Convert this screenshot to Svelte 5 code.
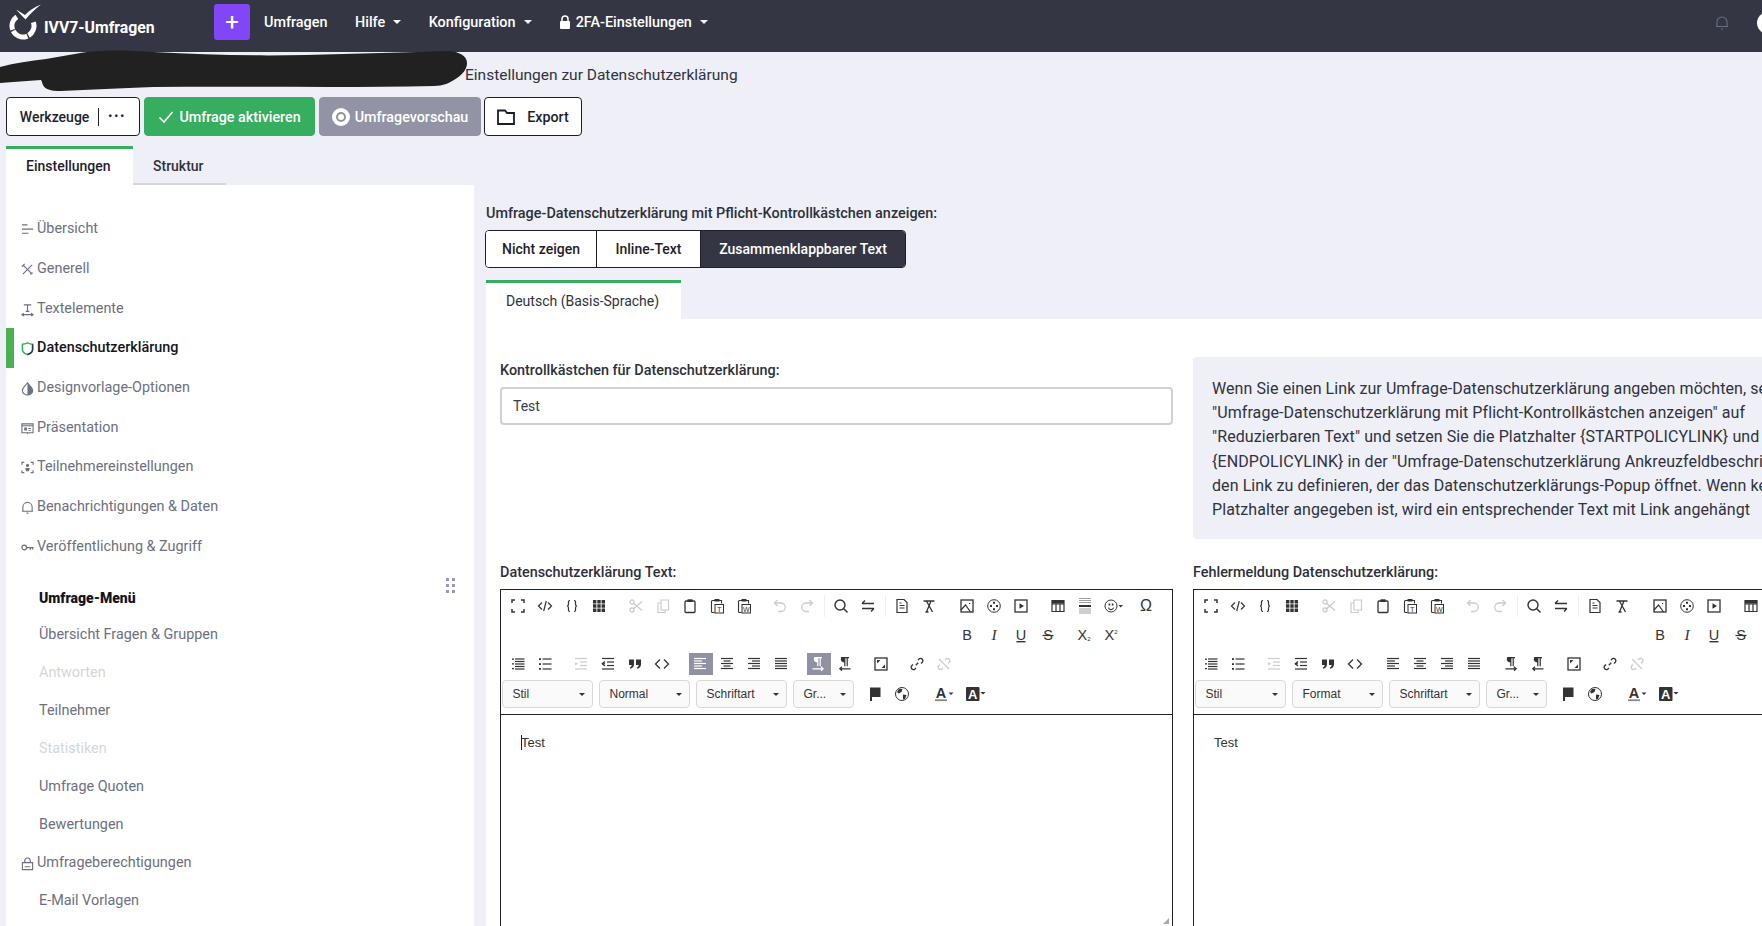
<script>
  const stroke = (d, w = 1.2) => `<path d="${d}" stroke-width="${w}"/>`;
  const fill = (d) => `<path d="${d}" fill="currentColor" stroke="none"/>`;
  const label = (t, size = 14, extra = '') =>
    `<text x="8" y="13" text-anchor="middle" font-size="${size}" fill="currentColor" stroke="none" font-family="Liberation Sans, sans-serif" ${extra}>${t}</text>`;
  const clip = '<path d="M5.5 14.5H3.5a1 1 0 0 1-1-1v-10a1 1 0 0 1 1-1h9v3" stroke-width="1.1"/><rect x="5.5" y="1" width="5" height="2.6" rx=".6" fill="currentColor" stroke="none"/>';
  const lines = (rows) => rows.map(([a, b, y]) => `<path d="M${a} ${y}H${b}" stroke-width="1.2"/>`).join('');
  const pilcrow = 'M4 1h8v1.2h-1.2v8H9.6v-8H8.4v8H7.2V6.4C5.2 6.4 3.8 5.2 3.8 3.6 3.8 2.2 4.4 1.4 4 1z';

  const tb = {
    fullscreen: stroke('M2 5V2h3M11 2h3v3M14 11v3h-3M5 14H2v-3', 1.5),
    code: stroke('M5 4.5 1.5 8 5 11.5M11 4.5 14.5 8 11 11.5M9.3 3l-2.6 10'),
    braces: stroke('M6 2.5c-2 0-1.5 2-1.5 3.5S4 8 3 8c1 0 1.5.5 1.5 2S4 13.5 6 13.5M10 2.5c2 0 1.5 2 1.5 3.5S12 8 13 8c-1 0-1.5.5-1.5 2s.5 3.5-1.5 3.5'),
    grid: fill('M2 2h3.4v3.4H2zM6.3 2h3.4v3.4H6.3zM10.6 2H14v3.4h-3.4zM2 6.3h3.4v3.4H2zM6.3 6.3h3.4v3.4H6.3zM10.6 6.3H14v3.4h-3.4zM2 10.6h3.4V14H2zM6.3 10.6h3.4V14H6.3zM10.6 10.6H14V14h-3.4z'),
    cut: '<circle cx="4" cy="4" r="2" stroke-width="1.3"/><circle cx="4" cy="12" r="2" stroke-width="1.3"/>' + stroke('M5.5 5.2 14 12.5M5.5 10.8 14 3.5', 1.3),
    copy: stroke('M6 2h7.5v10H6zM6 5H3v9.5h7V12'),
    paste: '<rect x="3" y="3" width="10" height="11.5" rx="1" stroke-width="1.3"/><rect x="5.5" y="1.3" width="5" height="2.7" fill="currentColor" stroke="none"/>',
    pastetext: clip + '<rect x="6" y="6.5" width="8.5" height="8.5" stroke-width="1"/><text x="10.2" y="13.5" text-anchor="middle" font-size="7.5" fill="currentColor" stroke="none" font-family="Liberation Sans, sans-serif">T</text>',
    pasteword: clip + '<rect x="6" y="6.5" width="8.5" height="8.5" stroke-width="1"/><text x="10.2" y="13.5" text-anchor="middle" font-size="7" fill="currentColor" stroke="none" font-family="Liberation Sans, sans-serif">W</text>',
    undo: stroke('M5.5 2 2.5 5l3 3M2.5 5H9a4.2 4.2 0 0 1 0 8.5H6', 1.3),
    redo: stroke('M10.5 2l3 3-3 3M13.5 5H7a4.2 4.2 0 0 0 0 8.5h3', 1.3),
    search: '<circle cx="7" cy="7" r="5" stroke-width="1.4"/>' + stroke('m10.5 10.5 4 4', 1.5),
    replace: stroke('M2 5.5h12M5 2.5l-3 3M14 10.5H2M11 13.5l3-3', 1.4),
    doc: stroke('M3 1.5h7l3 3v10H3zM5.5 7.5h5M5.5 10h5M5.5 5h2'),
    clean: stroke('M2.5 3h11M5.5 3l6 11M10 3 5.5 14M4.5 14h3', 1.3),
    image: '<rect x="2" y="2" width="12" height="12" stroke-width="1.3"/>' + stroke('m2 12 4.5-5 5 7M10 5.5h1.2'),
    media: '<circle cx="8" cy="8" r="6.3"/>' + fill('M7 3.8h2v2H7zM4 7h2v2H4zM10 7h2v2h-2zM7 10.2h2v2H7z'),
    play: '<rect x="2" y="2" width="12" height="12" stroke-width="1.3"/>' + fill('M6.5 5.2 11 8l-4.5 2.8z'),
    table: stroke('M2 2.5h12v11H2zM2 6h12M6 6v7.5M10 6v7.5', 1.2) + fill('M2 2h12v3.6H2z'),
    hr: '<path d="M2 .5h12M2 2.5h12M2 4.5h12M2 11h12M2 13h12M2 15h12" stroke="#888" stroke-width=".8"/>' + fill('M2 7h12v2H2z'),
    smile: '<circle cx="7" cy="8" r="6"/>' + fill('M4.6 5.6h1.6v1.8H4.6zM7.8 5.6h1.6v1.8H7.8z') + stroke('M4.3 9.6c1 2.6 4.4 2.6 5.4 0') + fill('M14.5 7h4.5L16.7 9.5z'),
    omega: label('Ω', 16),
    b: label('B', 14.5),
    i: '<text x="8" y="13" text-anchor="middle" font-size="15.5" font-style="italic" fill="currentColor" stroke="none" font-family="Liberation Serif, serif">I</text>',
    u: label('U', 14.5, 'y="12"') + fill('M3.5 14h9v1.4h-9z'),
    s: label('S', 14.5) + stroke('M2.5 8.5h11'),
    sub: label('X<tspan font-size="6" dy="1">2</tspan>', 14.5),
    sup: label('X<tspan font-size="6" dy="-6">2</tspan>', 14.5),
    ol: fill('M2 2.5h2v1.3H2zM2 7.2h2v1.3H2zM2 12h2v1.3H2z') + lines([[5, 14.5, 3], [5, 14.5, 5.5], [5, 14.5, 8], [5, 14.5, 10.5], [5, 14.5, 13]]),
    ul: fill('M2 2.3h2v1.7H2zM2 7.2h2v1.7H2zM2 12h2v1.7H2z') + lines([[5.5, 14.5, 3], [5.5, 14.5, 8], [5.5, 14.5, 13]]),
    outdent: lines([[2, 14, 2.5], [7, 14, 6], [7, 14, 9.5], [2, 14, 13]]) + fill('M2.2 6 5 7.8 2.2 9.6z'),
    indent: lines([[2, 14, 2.5], [7, 14, 6], [7, 14, 9.5], [2, 14, 13]]) + stroke('M5 5.5 2.2 7.8 5 10', 1.2) + stroke('M2 7.8h3'),
    quote: fill('M2 3.5h5v4.7c0 2.6-1.6 4-3.8 4.5l-.5-1.1c1.2-.5 1.9-1.3 2-2.6H2zM9 3.5h5v4.7c0 2.6-1.6 4-3.8 4.5l-.5-1.1c1.2-.5 1.9-1.3 2-2.6H9z'),
    tag: stroke('M6 3.5 1.5 8 6 12.5M10 3.5 14.5 8 10 12.5', 1.3),
    left: lines([[2, 14, 2.5], [2, 10, 5], [2, 14, 7.5], [2, 10, 10], [2, 14, 12.5]]),
    center: lines([[2, 14, 2.5], [4.5, 11.5, 5], [2, 14, 7.5], [4.5, 11.5, 10], [2, 14, 12.5]]),
    right: lines([[2, 14, 2.5], [6, 14, 5], [2, 14, 7.5], [6, 14, 10], [2, 14, 12.5]]),
    justify: lines([[2, 14, 2.5], [2, 14, 5], [2, 14, 7.5], [2, 14, 10], [2, 14, 12.5]]),
    ltr: fill(pilcrow) + stroke('M2.5 12.8h10.5M11 10.8l2.2 2-2.2 2'),
    rtl: fill(pilcrow) + stroke('M13.5 12.8H3M5 10.8l-2.2 2 2.2 2'),
    maximize: '<rect x="2" y="2" width="12" height="12" stroke-width="1.3"/>' + fill('M4 4h3.5L4 7.5zM12 12H8.5L12 8.5z'),
    link: stroke('M6.8 9.2 9.2 6.8M9 4l1.5-1.4a2.4 2.4 0 0 1 3 3.5L12 7.4M7 12l-1.5 1.4a2.4 2.4 0 0 1-3-3.5L4 8.6', 1.3),
    unlink: stroke('M9 4l1.5-1.4a2.4 2.4 0 0 1 3 3.5L12 7.4M7 12l-1.5 1.4a2.4 2.4 0 0 1-3-3.5L4 8.6M3 3l10 10', 1.3),
    flag: fill('M3 1.5h10.5v9.5H5v4H3z'),
    globe: '<circle cx="8" cy="8" r="6.5"/>' + fill('M5 2.8 8.5 3 7.5 6l-3 1.5L3 6zM9 8.5l3.5.5L11 13 9 13.5z'),
    color: '<text x="7" y="11.5" text-anchor="middle" font-size="14.5" font-weight="700" fill="currentColor" stroke="none" font-family="Liberation Sans, sans-serif">A</text><path d="M1 14.2h12" stroke="#888" stroke-width="1.8"/>' + fill('M14.5 6.5h5L17 9z'),
    bg: '<rect x="1" y="1" width="13.5" height="14" rx="1" fill="currentColor" stroke="none"/><text x="7.7" y="13" text-anchor="middle" font-size="13" font-weight="700" fill="#fff" stroke="none" font-family="Liberation Sans, sans-serif">A</text>' + fill('M15.5 6h5L18 8.5z')
  };

  // gap = free space before the button, sep = thin divider in that space, off = disabled
  const row1 = [
    { i: 'fullscreen' }, { i: 'code' }, { i: 'braces' }, { i: 'grid' },
    { i: 'cut', gap: 9.5, off: true }, { i: 'copy', off: true }, { i: 'paste' }, { i: 'pastetext' }, { i: 'pasteword' },
    { i: 'undo', gap: 9.5, off: true }, { i: 'redo', off: true },
    { i: 'search', gap: 7, sep: true }, { i: 'replace' },
    { i: 'doc', gap: 7, sep: true }, { i: 'clean' },
    { i: 'image', gap: 11 }, { i: 'media' }, { i: 'play' },
    { i: 'table', gap: 10 }, { i: 'hr' }, { i: 'smile' }, { i: 'omega', gap: 7 }
  ];
  const row2 = [
    { i: 'b', gap: 449 }, { i: 'i' }, { i: 'u' }, { i: 's' }, { i: 'sub', gap: 9 }, { i: 'sup' }
  ];
  const row3 = [
    { i: 'ol' }, { i: 'ul' },
    { i: 'outdent', gap: 9, off: true }, { i: 'indent' }, { i: 'quote' }, { i: 'tag' },
    { i: 'left', gap: 11, on: true }, { i: 'center' }, { i: 'right' }, { i: 'justify' },
    { i: 'ltr', gap: 10, on: true }, { i: 'rtl' },
    { i: 'maximize', gap: 9 },
    { i: 'link', gap: 9 }, { i: 'unlink', off: true }
  ];
  const row4 = [
    { i: 'flag', gap: 8 }, { i: 'globe' }, { i: 'color', gap: 13 }, { i: 'bg', gap: 4 }
  ];

  const side = {
    list: stroke('M1 2h6M1 6.5h12M1 11h7'),
    tools: stroke('M2 2l10 10M12 2 2 12M1 4l3-3M10 12l2.5-1.5'),
    text: stroke('M3 2h8M7 2v7M5 9h4M1 12.5h12M3 11l-2 1.5L3 14M11 11l2 1.5L11 14'),
    shield: '<path d="M1.5 2.5C4 2.5 5.5 1.8 7 1c1.5.8 3 1.5 5.5 1.5V8c0 2.8-2.5 4.5-5.5 5.5C4 12.5 1.5 10.8 1.5 8z" stroke-width="1.6" stroke="#37ae5f"/><path d="M7 13.5C10 12.5 12.5 10.8 12.5 8V2.5" stroke-width="1.6" stroke="#2c3a4a"/>',
    drop: stroke('M7 1C4.5 4 1.5 6 1.5 9a5.5 5 0 0 0 11 0C12.5 6 9.5 4 7 1z') + fill('M7 1c2.5 3 5.5 5 5.5 8A5.5 5 0 0 1 7 14z'),
    screen: stroke('M1 2h12v9.5H1zM1 4h12M7 11.5V13') + fill('M3.5 6h3v3h-3zM8 6.5h2.5v1H8zM8 8.5h2.5v1H8z'),
    person: stroke('M1 4V1.5h2.5M13 4V1.5h-2.5M1 10v2.5h2.5M13 10v2.5h-2.5') + fill('M7 3a1.7 1.7 0 1 1 0 3.4A1.7 1.7 0 0 1 7 3zM4.5 7.5h5l-1 3.5h-3z'),
    bell: stroke('M2 11V6.5a5 5 0 0 1 10 0V11zM1 11h12M6 13h2'),
    key: '<circle cx="3.5" cy="7" r="2.5" stroke-width="1.3"/>' + stroke('M6 7h7.5M10 7v2.5M12.5 7v2', 1.3),
    lock: stroke('M1.5 6h11v7.5h-11zM4 6V4a3 3 0 0 1 6 0v2M4 10.5h6', 1.2)
  };

  const topItems = [
    { t: 'Übersicht', i: 'list' },
    { t: 'Generell', i: 'tools' },
    { t: 'Textelemente', i: 'text' },
    { t: 'Datenschutzerklärung', i: 'shield', active: true },
    { t: 'Designvorlage-Optionen', i: 'drop' },
    { t: 'Präsentation', i: 'screen' },
    { t: 'Teilnehmereinstellungen', i: 'person' },
    { t: 'Benachrichtigungen & Daten', i: 'bell' },
    { t: 'Veröffentlichung & Zugriff', i: 'key' }
  ];
  const menuItems = [
    { t: 'Übersicht Fragen & Gruppen' },
    { t: 'Antworten', off: true },
    { t: 'Teilnehmer' },
    { t: 'Statistiken', off: true },
    { t: 'Umfrage Quoten' },
    { t: 'Bewertungen' },
    { t: 'Umfrageberechtigungen', i: 'lock' },
    { t: 'E-Mail Vorlagen' }
  ];
  const info = [
    'Wenn Sie einen Link zur Umfrage-Datenschutzerklärung angeben möchten, setzen Sie',
    '"Umfrage-Datenschutzerklärung mit Pflicht-Kontrollkästchen anzeigen" auf',
    '"Reduzierbaren Text" und setzen Sie die Platzhalter {STARTPOLICYLINK} und',
    '{ENDPOLICYLINK} in der "Umfrage-Datenschutzerklärung Ankreuzfeldbeschriftung", um',
    'den Link zu definieren, der das Datenschutzerklärungs-Popup öffnet. Wenn kein',
    'Platzhalter angegeben ist, wird ein entsprechender Text mit Link angehängt'
  ];
</script>

{#snippet tbRow(items, highlight)}
  <div class="tb-row">
    {#each items as item}
      {#if item.gap}
        <span class="gap" class:sep={item.sep} style="width:{item.gap}px"></span>
      {/if}
      <span class="tb-btn" class:off={item.off} class:on={item.on && highlight}>
        <svg viewBox="0 0 16 16" width="16" height="16">{@html tb[item.i]}</svg>
      </span>
    {/each}
  </div>
{/snippet}

{#snippet editor(format, highlight, caret)}
  <div class="editor">
    <div class="toolbar">
      {@render tbRow(row1, highlight)}
      {@render tbRow(row2, highlight)}
      {@render tbRow(row3, highlight)}
      <div class="tb-row combos">
        <span class="combo">Stil</span>
        <span class="combo">{format}</span>
        <span class="combo">Schriftart</span>
        <span class="combo small">Gr...</span>
        {#each row4 as item}
          <span class="gap" style="width:{item.gap ?? 0}px"></span>
          <span class="tb-btn"><svg viewBox="0 0 16 16" width="16" height="16">{@html tb[item.i]}</svg></span>
        {/each}
      </div>
    </div>
    <div class="content">{#if caret}<span class="caret"></span>{/if}Test</div>
    <svg class="grip" viewBox="0 0 6 6" width="6" height="6"><path d="M6 0v6H0z" fill="#aaa"/></svg>
  </div>
{/snippet}

<header class="topbar">
  <a class="brand" href="#top">
    <svg class="logo" viewBox="0 0 34 36" width="34" height="36">
      <circle cx="15" cy="22" r="11" pathLength="100" stroke-dasharray="22 2 24 2 21 29" transform="rotate(-20 15 22)" fill="none" stroke="#fff" stroke-width="5"/>
      <path d="M8 5.5 17 11C21 6.5 27 3 33 .5 27 5 22 10 17.5 15.5z" fill="#fff"/>
    </svg>
    <span>IVV7-Umfragen</span>
  </a>
  <button class="plus">+</button>
  <nav class="nav">
    <a href="#top">Umfragen</a>
    <a href="#top" class="drop">Hilfe</a>
    <a href="#top" class="drop">Konfiguration</a>
    <a href="#top" class="drop twofa">
      <svg viewBox="0 0 12 14" width="12" height="14"><path d="M3 6V4a3 3 0 0 1 6 0v2" fill="none" stroke="#fff" stroke-width="1.5"/><rect x="1" y="6" width="10" height="8" rx="1" fill="#fff"/></svg>
      2FA-Einstellungen
    </a>
  </nav>
  <svg class="bell" viewBox="0 0 14 16" width="14" height="16"><path d="M2 11.5V7a5 5 0 0 1 10 0v4.5zM1 11.5h12M6 14h2" fill="none" stroke="#66707f" stroke-width="1.1"/></svg>
  <span class="avatar"></span>
</header>

<div class="crumb">
  <svg class="scribble" viewBox="0 0 470 45" width="470" height="45">
    <path d="M0 17C15 13 30 11 46 9 65 6 85 1 102 1 120 0 135 1 153 2 205 5 255 6 306 5 355 4 410 2 449 1 460 2 467 6 467 13 467 19 463 24 457 28 450 33 443 36 434 36 340 38 245 36 153 37 120 38 90 40 61 41 50 41 45 39 43 35 42 33 42 31 41 30 27 31 13 32 0 33Z" fill="#212121"/>
  </svg>
  <span>Einstellungen zur Datenschutzerklärung</span>
</div>

<div class="actions">
  <button class="btn tools">Werkzeuge<i></i><b>•••</b></button>
  <button class="btn green">
    <svg viewBox="0 0 16 14" width="16" height="14"><path d="M1.5 7.5 6 12 14.5 2" fill="none" stroke="#fff" stroke-width="1.6"/></svg>
    Umfrage aktivieren
  </button>
  <button class="btn gray">
    <svg viewBox="0 0 18 18" width="18" height="18"><circle cx="9" cy="9" r="9" fill="#fff"/><circle cx="9" cy="9" r="5" fill="#9294a6"/><circle cx="9" cy="9" r="3" fill="#fff"/></svg>
    Umfragevorschau
  </button>
  <button class="btn export">
    <svg viewBox="0 0 18 16" width="18" height="16"><path d="M1 1.5h7l2 2.500h7v11H1z" fill="none" stroke="#1c1c28" stroke-width="1.8"/></svg>
    Export
  </button>
</div>

<div class="tabs">
  <span class="tab active">Einstellungen</span>
  <span class="tab">Struktur</span>
</div>

<div class="layout">
  <aside class="sidebar">
    <ul class="side-top">
      {#each topItems as item}
        <li class:active={item.active}>
          <svg viewBox="0 0 14 15" width="13" height="14">{@html side[item.i]}</svg>
          {item.t}
        </li>
      {/each}
    </ul>
    <div class="side-menu">
      <div class="menu-head">
        <strong>Umfrage-Menü</strong>
        <svg viewBox="0 0 10 15" width="10" height="15"><path d="M0 0h3v3H0zM6 0h3v3H6zM0 6h3v3H0zM6 6h3v3H6zM0 12h3v3H0zM6 12h3v3H6z" fill="#9a9cae"/></svg>
      </div>
      {#each menuItems as item}
        <div class="menu-item" class:off={item.off} class:iconed={item.i}>
          {#if item.i}<svg viewBox="0 0 14 15" width="13" height="14">{@html side[item.i]}</svg>{/if}
          {item.t}
        </div>
      {/each}
    </div>
  </aside>

  <main class="main">
    <label class="field-label top-label" for="policy">Umfrage-Datenschutzerklärung mit Pflicht-Kontrollkästchen anzeigen:</label>
    <div class="segments" id="policy">
      <span>Nicht zeigen</span>
      <span>Inline-Text</span>
      <span class="on">Zusammenklappbarer Text</span>
    </div>
    <div class="lang-tab">Deutsch (Basis-Sprache)</div>
    <section class="panel">
      <div class="grid">
        <div class="cell">
          <div class="field-label">Kontrollkästchen für Datenschutzerklärung:</div>
          <div class="input">Test</div>
        </div>
        <div class="info">
          {#each info as line}<div>{line}</div>{/each}
        </div>
        <div class="cell">
          <div class="field-label">Datenschutzerklärung Text:</div>
          {@render editor('Normal', true, true)}
        </div>
        <div class="cell">
          <div class="field-label">Fehlermeldung Datenschutzerklärung:</div>
          {@render editor('Format', false, false)}
        </div>
      </div>
    </section>
  </main>
</div>

<style>
  :global(body) {
    margin: 0;
    height: 100vh;
    overflow: hidden;
    background: #eeeff7;
    font-family: Roboto, "Noto Sans", sans-serif;
    font-size: 14.4px;
    color: #1e1e2a;
  }

  .topbar {
    display: flex;
    height: 52px;
    background: #343743;
    color: #fff;
    overflow: hidden;
  }

  .brand {
    display: flex;
    color: #fff;
    text-decoration: none;
    font-weight: 700;
    font-size: 15.8px;
    width: 214px;
    flex: none;
    padding-left: 8px;
    padding-top: 4px;
    box-sizing: border-box;
  }

  .brand span {
    margin: 14px 0 0 2px;
    line-height: 20px;
  }

  .plus {
    width: 36px;
    height: 36px;
    margin-top: 4px;
    padding: 0;
    flex: none;
    border: 0;
    border-radius: 3px;
    background: #8146f6;
    color: #fff;
    font-size: 24px;
    line-height: 34px;
    font-family: Roboto, sans-serif;
  }

  .nav {
    display: flex;
    margin-left: 14px;
    padding-top: 13px;
  }

  .nav a {
    color: #fff;
    text-decoration: none;
    font-weight: 500;
    line-height: 20px;
    white-space: nowrap;
  }

  .nav a + a {
    margin-left: 27.5px;
  }

  .drop::after {
    content: "";
    display: inline-block;
    margin-left: 8px;
    vertical-align: 3px;
    border-top: 4px solid #fff;
    border-left: 4px solid transparent;
    border-right: 4px solid transparent;
  }

  .twofa svg {
    vertical-align: -2px;
    margin-right: 1px;
  }

  .bell {
    margin: 15px 0 0 auto;
    flex: none;
  }

  .avatar {
    flex: none;
    width: 22px;
    height: 22px;
    margin: 12px -17px 0 28px;
    border-radius: 50%;
    background: #fff;
  }

  .crumb {
    position: relative;
    height: 45px;
    box-sizing: border-box;
    padding: 13px 0 0 465px;
    font-size: 15.5px;
    line-height: 20px;
    color: #30323e;
  }

  .scribble {
    position: absolute;
    left: 0;
    top: -2px;
  }

  .actions {
    display: flex;
    margin-left: 6px;
    gap: 4px;
  }

  .btn {
    display: flex;
    align-items: center;
    justify-content: center;
    height: 39px;
    padding: 0;
    border: 1px solid #1e1e2a;
    border-radius: 4px;
    background: #fff;
    color: #1e1e2a;
    font: 500 14.3px Roboto, sans-serif;
    box-sizing: border-box;
    white-space: nowrap;
  }

  .tools {
    width: 134px;
    font-size: 14px;
  }

  .tools i {
    width: 1px;
    height: 18px;
    margin: 0 9px;
    background: #1e1e2a;
  }

  .tools b {
    font-size: 11px;
    letter-spacing: 2px;
  }

  .green {
    width: 171px;
    gap: 5px;
    background: #37ae5f;
    border-color: #37ae5f;
    color: #fff;
  }

  .gray {
    width: 162px;
    gap: 5px;
    background: #9294a6;
    border-color: #9294a6;
    color: #fff;
  }

  .export {
    width: 98px;
    gap: 12px;
    margin-left: -1px;
  }

  .tabs {
    display: flex;
    margin: 10px 0 0 6px;
    height: 39px;
  }

  .tab {
    box-sizing: border-box;
    padding: 2px 20px 0;
    width: 93px;
    line-height: 37px;
    font-size: 14px;
    font-weight: 500;
    border-bottom: 2px solid #d5d6dc;
    color: #30323e;
  }

  .tab.active {
    width: 127px;
    padding-top: 0;
    background: #fff;
    border-top: 3px solid #37ae5f;
    border-bottom: 0;
    line-height: 35px;
    color: #1e1e2a;
  }

  .layout {
    display: flex;
    align-items: flex-start;
    margin-left: 6px;
  }

  .sidebar {
    flex: none;
    width: 468px;
    height: 800px;
    padding-top: 24px;
    box-sizing: border-box;
    background: #fff;
  }

  .side-top {
    list-style: none;
    margin: 0;
    padding: 0;
  }

  .side-top li {
    display: flex;
    align-items: center;
    gap: 3px;
    height: 39.7px;
    padding-left: 15px;
    color: #6c7080;
    box-sizing: border-box;
  }

  .side-top li.active {
    border-left: 8px solid #4caf50;
    padding-left: 7px;
    color: #14141e;
    font-weight: 500;
  }

  .side-top svg,
  .menu-item svg {
    flex: none;
    margin-top: 3px;
    fill: none;
    stroke: currentColor;
  }

  .side-menu {
    margin-top: 12px;
    padding: 0 18px 0 33px;
  }

  .menu-head {
    display: flex;
    justify-content: space-between;
    height: 37px;
    padding-top: 1px;
    box-sizing: content-box;
    align-items: center;
    font-weight: 700;
    font-size: 14px;
    color: #14141e;
    margin-bottom: -1px;
  }

  .menu-head svg {
    align-self: flex-start;
    margin-top: -1px;
  }

  .menu-item {
    display: flex;
    align-items: center;
    height: 38.1px;
    color: #6c7080;
  }

  .menu-item.off {
    color: #d4d6dd;
  }

  .menu-item.iconed {
    margin-left: -18px;
    gap: 3px;
  }

  .main {
    flex: none;
    width: 1400px;
    margin-left: 12px;
    padding-top: 18px;
  }

  .field-label {
    display: block;
    font-weight: 500;
    line-height: 20px;
    padding-top: 1px;
    margin-bottom: -1px;
    color: #2d2f3a;
  }

  .top-label {
    margin-bottom: 6px;
  }

  .segments {
    display: inline-flex;
    height: 38px;
    width: 421px;
    margin-left: -1px;
    box-sizing: border-box;
    border: 1px solid #1e1e2a;
    border-radius: 4px;
    overflow: hidden;
    font-size: 14px;
    font-weight: 500;
    vertical-align: top;
  }

  .segments span {
    display: flex;
    align-items: center;
    justify-content: center;
    background: #fff;
    width: 111px;
    box-sizing: border-box;
    border-right: 1px solid #1e1e2a;
  }

  .segments span:nth-child(2) {
    width: 104px;
  }

  .segments .on {
    flex: 1;
    background: #343743;
    border: 0;
    color: #fff;
  }

  .lang-tab {
    width: 195px;
    height: 39px;
    margin-top: 12px;
    padding-left: 20px;
    box-sizing: border-box;
    background: #fff;
    border-top: 3px solid #37ae5f;
    font-size: 14px;
    line-height: 36px;
    color: #30323e;
  }

  .panel {
    background: #fff;
    padding: 41px 14px 0;
  }

  .grid {
    display: grid;
    grid-template-columns: 673px 700px;
    column-gap: 20px;
    grid-template-rows: 182px auto;
    row-gap: 20px;
  }

  .input {
    height: 38px;
    margin-top: 7px;
    padding-left: 11px;
    box-sizing: border-box;
    border: 2px solid #d0d0d6;
    border-radius: 4px;
    font-size: 14px;
    line-height: 34px;
    color: #3a3c48;
  }

  .info {
    margin-top: -3px;
    padding: 20px 19px 0;
    height: 182px;
    box-sizing: border-box;
    background: #eeeff7;
    border-radius: 4px;
    font-size: 16px;
    letter-spacing: 0.08px;
    line-height: 24.2px;
    white-space: nowrap;
    color: #30323e;
  }

  .editor {
    position: relative;
    width: 673px;
    height: 340px;
    margin-top: 7px;
    box-sizing: border-box;
    border: 1px solid #222;
    background: #fff;
    color: #333;
  }

  .toolbar {
    box-sizing: border-box;
    height: 125px;
    padding: 1px 0 0 3.5px;
    border-bottom: 1px solid #222;
  }

  .tb-row {
    display: flex;
    align-items: center;
    height: 29px;
  }

  .tb-btn {
    flex: none;
    display: flex;
    align-items: center;
    justify-content: center;
    width: 27px;
    height: 22px;
    color: #333;
  }

  .tb-btn svg {
    fill: none;
    stroke: currentColor;
    overflow: visible;
  }

  .tb-btn.off {
    color: #ccc;
  }

  .tb-btn.on {
    background: #9092a4;
    color: #fff;
    border-radius: 1px;
    background-clip: content-box;
    padding: 0 1.5px;
    box-sizing: border-box;
  }

  .gap {
    flex: none;
    height: 22px;
    position: relative;
  }

  .gap.sep::after {
    content: "";
    position: absolute;
    left: 50%;
    top: 0;
    height: 22px;
    border-left: 1px solid #eee;
  }

  .combos {
    margin: 1px 0 0 -3px;
    gap: 0;
  }

  .combo {
    position: relative;
    flex: none;
    width: 91px;
    height: 28px;
    margin-right: 6px;
    padding-left: 10px;
    box-sizing: border-box;
    border: 1px solid #d8d8d8;
    border-radius: 4px;
    background: #fafafa;
    font: 12px/26px "Liberation Sans", Arial, sans-serif;
    color: #333;
  }

  .combo.small {
    width: 61px;
    margin-right: 0;
  }

  .combo::after {
    content: "";
    position: absolute;
    right: 7px;
    top: 12px;
    border-top: 3px solid #333;
    border-left: 3px solid transparent;
    border-right: 3px solid transparent;
  }

  .content {
    padding: 18px 20px 0;
    font: 13px/20px "Liberation Sans", Arial, sans-serif;
    color: #333;
  }

  .caret {
    display: inline-block;
    width: 1px;
    height: 15px;
    margin-right: -1px;
    vertical-align: -3px;
    background: #222;
  }

  .grip {
    position: absolute;
    right: 3px;
    bottom: 4px;
  }
</style>
